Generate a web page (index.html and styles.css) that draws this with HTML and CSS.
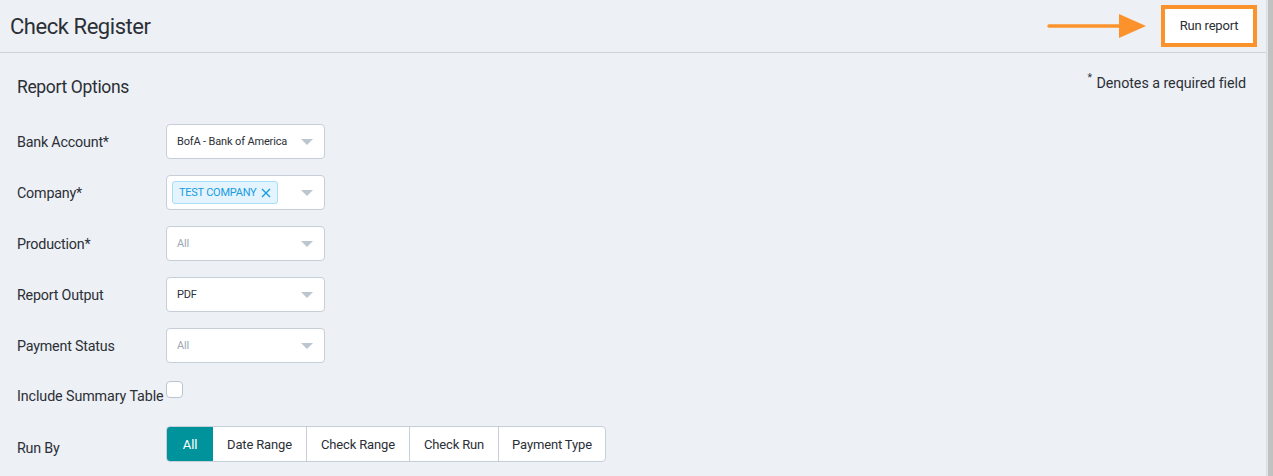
FILE: index.html
```html
<!DOCTYPE html>
<html>
<head>
<meta charset="utf-8">
<link rel="stylesheet" href="styles.css">
</head>
<body>
<div class="app">
  <div class="main">
    <header class="header">
      <h1 class="title">Check Register</h1>
      <div class="actions">
        <svg class="arrow" width="100" height="28" viewBox="0 0 100 28">
          <line x1="2" y1="14" x2="76" y2="14" stroke="#fb922b" stroke-width="3.5" stroke-linecap="round"/>
          <polygon points="72,2 99,14 72,26" fill="#fb922b"/>
        </svg>
        <div class="run-frame"><button class="run-btn">Run report</button></div>
      </div>
    </header>
    <section class="options">
      <div class="options-head">
        <h2 class="section-title">Report Options</h2>
        <div class="required-note"><sup>*</sup> Denotes a required field</div>
      </div>
      <div class="form">
        <div class="row">
          <label class="label">Bank Account*</label>
          <div class="select"><span class="value">BofA - Bank of America</span><span class="caret"></span></div>
        </div>
        <div class="row">
          <label class="label">Company*</label>
          <div class="select select-chip">
            <span class="chip">TEST COMPANY
              <svg class="chip-x" width="10" height="10" viewBox="0 0 10 10"><path d="M1 1L9 9M9 1L1 9" stroke="#1a9be0" stroke-width="1.4"/></svg>
            </span>
            <span class="caret"></span>
          </div>
        </div>
        <div class="row">
          <label class="label">Production*</label>
          <div class="select"><span class="value placeholder">All</span><span class="caret"></span></div>
        </div>
        <div class="row">
          <label class="label">Report Output</label>
          <div class="select"><span class="value">PDF</span><span class="caret"></span></div>
        </div>
        <div class="row">
          <label class="label">Payment Status</label>
          <div class="select"><span class="value placeholder">All</span><span class="caret"></span></div>
        </div>
        <div class="row row-check">
          <label class="label label-check">Include Summary Table</label>
          <span class="checkbox"></span>
        </div>
        <div class="row row-runby">
          <label class="label label-runby">Run By</label>
          <div class="segmented">
            <span class="seg seg-active">All</span>
            <span class="seg seg-date">Date Range</span>
            <span class="seg seg-crange">Check Range</span>
            <span class="seg seg-crun">Check Run</span>
            <span class="seg seg-ptype">Payment Type</span>
          </div>
        </div>
      </div>
    </section>
  </div>
  <div class="scrollbar"></div>
</div>
</body>
</html>
```

FILE: styles.css
```css
* { box-sizing: border-box; }
html, body { margin: 0; padding: 0; }
body {
  background: #edf0f5;
  font-family: Roboto, "Liberation Sans", sans-serif;
  color: #2b2f36;
  width: 1273px;
  height: 476px;
  overflow: hidden;
}
.app {
  display: flex;
  height: 476px;
}
.main {
  flex: 1;
  border-right: 1px solid #dadde2;
}
.scrollbar {
  width: 6px;
  background: #c1c1c1;
  border-left: 1px solid #e6e6e6;
}
.header {
  height: 53px;
  border-bottom: 1px solid #cfd4da;
  display: flex;
  align-items: center;
  justify-content: space-between;
  padding: 0 9px 0 10px;
}
.title {
  margin: 0;
  font-size: 22px;
  font-weight: 400;
  letter-spacing: -0.45px;
  margin-top: 1px;
}
.actions {
  display: flex;
  align-items: center;
  gap: 14px;
  margin-top: -1px;
}
.arrow { display: block; }
.run-frame {
  border: 4px solid #fb922b;
  width: 96px;
  height: 42px;
  background: #fff;
  display: flex;
}
.run-btn {
  flex: 1;
  border: 0;
  background: #fff;
  font-family: Roboto, "Liberation Sans", sans-serif;
  font-size: 13px;
  letter-spacing: -0.2px;
  color: #2b2f36;
  padding: 0;
}
.options {
  padding: 0 20px 0 17px;
}
.options-head {
  display: flex;
  justify-content: space-between;
  align-items: flex-start;
  height: 71px;
}
.section-title {
  margin: 24px 0 0 0;
  font-size: 17.5px;
  font-weight: 400;
  letter-spacing: -0.35px;
}
.required-note {
  margin-top: 19px;
  font-size: 14.3px;
  letter-spacing: -0.05px;
}
.required-note sup {
  font-size: 10.5px;
  position: relative;
  top: -1px;
  margin-right: 1px;
}
.form {
  display: flex;
  flex-direction: column;
}
.row {
  display: flex;
  align-items: center;
  height: 35px;
  margin-bottom: 16px;
}
.label {
  width: 149px;
  font-size: 14.3px;
  letter-spacing: -0.2px;
  flex-shrink: 0;
  padding-top: 1px;
}
.select {
  width: 159px;
  height: 35px;
  background: #fff;
  border: 1px solid #c6ced8;
  border-radius: 4px;
  display: flex;
  align-items: center;
  justify-content: space-between;
  padding: 0 11px 0 10px;
}
.value {
  font-size: 11px;
  letter-spacing: -0.15px;
  color: #2b2f36;
}
.placeholder { color: #9ca8b5; }
.caret {
  width: 0;
  height: 0;
  border-left: 6px solid transparent;
  border-right: 6px solid transparent;
  border-top: 6px solid #bcc6d0;
}
.select-chip { padding-left: 5px; }
.chip {
  display: flex;
  align-items: center;
  gap: 5px;
  height: 23px;
  padding: 0 6px 0 6px;
  background: #e3f4fe;
  border: 1px solid #a9dcf7;
  border-radius: 3px;
  color: #1a9be0;
  font-size: 11px;
  letter-spacing: -0.25px;
}
.chip-x { display: block; }
.row-check {
  height: 17px;
  margin-top: 2px;
  margin-bottom: 28px;
  align-items: flex-start;
}
.label-check {
  width: auto;
  margin-top: 6px;
  letter-spacing: -0.1px;
}
.checkbox {
  width: 17px;
  height: 17px;
  background: #fff;
  border: 1px solid #b9c5d2;
  border-radius: 4px;
  margin-left: 2px;
}
.row-runby { height: 36px; }
.label-runby { margin-top: 7px; }
.segmented {
  display: flex;
  height: 36px;
  background: #fff;
  border: 1px solid #c6ced8;
  border-radius: 4px;
  overflow: hidden;
}
.seg {
  display: flex;
  align-items: center;
  justify-content: center;
  font-size: 13px;
  letter-spacing: -0.15px;
  color: #2b2f36;
  border-left: 1px solid #c6ced8;
}
.seg-active {
  background: #01939c;
  color: #fff;
  border-left: 0;
  width: 46px;
}
.seg-date { width: 93px; border-left: 0; }
.seg-crange { width: 103px; }
.seg-crun { width: 89px; }
.seg-ptype { width: 107px; }
```
